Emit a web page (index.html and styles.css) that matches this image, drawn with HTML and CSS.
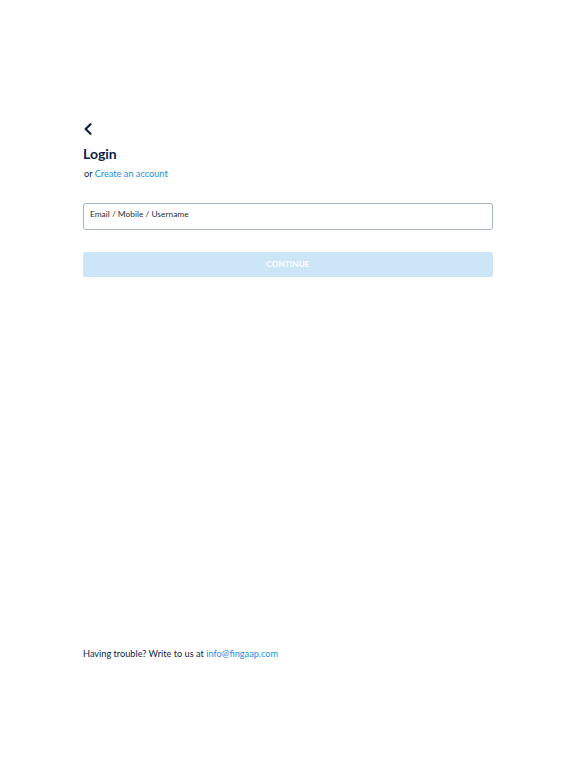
FILE: index.html
```html
<!DOCTYPE html>
<html lang="en">
<head>
<meta charset="utf-8">
<title>Login</title>
<link rel="stylesheet" href="styles.css">
</head>
<body>
<div class="page">
  <main class="login">
    <button class="back" aria-label="Back">
      <svg width="10" height="12" viewBox="0 0 10 12"><path d="M7.5 1.2 L2.6 6 L7.5 10.8" fill="none" stroke="#0e1f45" stroke-width="2.2" stroke-linecap="round" stroke-linejoin="round"/></svg>
    </button>
    <h1 class="title">Login</h1>
    <p class="sub">or <a href="#" class="link">Create an account</a></p>
    <div class="field">
      <input class="input" type="text" placeholder="Email / Mobile / Username">
    </div>
    <button class="continue" disabled>CONTINUE</button>
  </main>
  <footer class="footer">Having trouble? Write to us at <a href="#" class="link">info@fingaap.com</a></footer>
</div>
</body>
</html>
```
FILE: styles.css
```css
html, body {
  margin: 0;
  padding: 0;
  background: #ffffff;
}
body {
  font-family: Lato, "Noto Sans", sans-serif;
  color: #0e1f45;
}
.page {
  width: 410px;
  margin: 0 auto;
  height: 768px;
  display: flex;
  flex-direction: column;
  box-sizing: border-box;
  padding-top: 122px;
  padding-bottom: 107px;
}
.login {
  display: flex;
  flex-direction: column;
}
.back {
  align-self: flex-start;
  background: none;
  border: 0;
  padding: 0;
  margin: 0;
  width: 10px;
  height: 14px;
  display: flex;
  align-items: center;
  cursor: pointer;
}
.title {
  margin: 9px 0 0 0;
  font-size: 14px;
  font-weight: 700;
  line-height: 18px;
  color: #0e1f45;
}
.sub {
  margin: 4px 0 0 1px;
  font-size: 9.2px;
  line-height: 14px;
  color: #0e1f45;
}
.link {
  color: #1c8fe3;
  text-decoration: none;
}
.field {
  margin-top: 20px;
}
.input {
  box-sizing: border-box;
  width: 100%;
  height: 27px;
  border: 1px solid #aab3c5;
  border-radius: 3px;
  padding: 0 6px 4px 6px;
  font-family: Lato, "Noto Sans", sans-serif;
  font-size: 8.4px;
  color: #222;
  outline: none;
  background: #fff;
}
.input::placeholder {
  color: #2b2f3a;
  opacity: 1;
}
.continue {
  margin-top: 22px;
  height: 25px;
  border: 0;
  border-radius: 2px;
  background: #cce6f8;
  color: #ffffff;
  font-family: Lato, "Noto Sans", sans-serif;
  font-size: 8px;
  font-weight: 700;
  letter-spacing: 0.2px;
  padding: 0;
}
.footer {
  margin-top: auto;
  font-size: 9.2px;
  line-height: 14px;
  color: #0e1f45;
}
```
